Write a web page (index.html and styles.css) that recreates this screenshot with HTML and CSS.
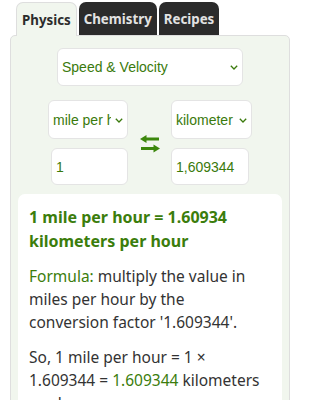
FILE: index.html
```html
<!DOCTYPE html>
<html>
<head>
<meta charset="utf-8">
<link rel="stylesheet" href="styles.css">
</head>
<body>
<div class="app">
  <div class="tabs">
    <div class="tab active">Physics</div>
    <div class="tab">Chemistry</div>
    <div class="tab">Recipes</div>
  </div>
  <div class="panel">
    <div class="sel-wrap category">
      <select class="sel"><option>Speed &amp; Velocity</option></select>
      <svg class="chev" viewBox="0 0 8 5" width="8" height="5"><path d="M0.8 0.8 L4 4 L7.2 0.8" fill="none" stroke="#3a7a0c" stroke-width="1.3"/></svg>
    </div>
    <div class="converter">
      <div class="col left">
        <div class="sel-wrap unit-l">
          <select class="sel"><option>mile per hour</option></select>
          <svg class="chev" viewBox="0 0 8 5" width="8" height="5"><path d="M0.8 0.8 L4 4 L7.2 0.8" fill="none" stroke="#3a7a0c" stroke-width="1.3"/></svg>
        </div>
        <input class="num num-l" type="text" value="1">
      </div>
      <div class="swap">
        <svg viewBox="0 0 20 18" width="20" height="18">
          <path d="M0 4 L6.5 0 V2.6 H19 V5.4 H6.5 V8 Z" fill="#3c870c"/>
          <path d="M20 13.5 L13.5 9.5 V12.1 H1 V14.9 H13.5 V17.5 Z" fill="#3c870c"/>
        </svg>
      </div>
      <div class="col right">
        <div class="sel-wrap unit-r">
          <select class="sel"><option>kilometer per hour</option></select>
          <svg class="chev" viewBox="0 0 8 5" width="8" height="5"><path d="M0.8 0.8 L4 4 L7.2 0.8" fill="none" stroke="#3a7a0c" stroke-width="1.3"/></svg>
        </div>
        <input class="num num-r" type="text" value="1,609344">
      </div>
    </div>
    <div class="card">
      <h2 class="result">1 mile per hour = 1.60934 kilometers per hour</h2>
      <p class="text"><span class="hl">Formula:</span> multiply the value in miles per hour by the conversion factor '1.609344'.</p>
      <p class="text">So, 1 mile per hour = 1 × 1.609344 = <span class="hl">1.609344</span> kilometers per hour.</p>
    </div>
  </div>
</div>
</body>
</html>
```
FILE: styles.css
```css
html, body {
  margin: 0;
  padding: 0;
  background: #ffffff;
}
body {
  font-family: "Noto Sans", "Open Sans", sans-serif;
  color: #333333;
  overflow: hidden;
  width: 300px;
  height: 400px;
}
.app {
  width: 280px;
  padding: 2px 10px 0 10px;
}
.tabs {
  display: flex;
  gap: 2px;
  padding-left: 6px;
  height: 33px;
  position: relative;
  z-index: 2;
}
.tab {
  box-sizing: border-box;
  height: 33px;
  padding: 0 5px;
  display: flex;
  align-items: center;
  font-weight: bold;
  font-size: 13.3px;
  color: #e2e2e2;
  background: #2b2b2b;
  border-radius: 7px 7px 0 0;
}
.tab.active {
  background: #f1f6ee;
  color: #2c2c2c;
  border: 1px solid #dedede;
  border-bottom: none;
  height: 34px;
  margin-bottom: -1px;
}
.panel {
  box-sizing: border-box;
  width: 280px;
  background: #f1f6ee;
  border: 1px solid #dedede;
  border-radius: 5px;
  padding: 12px 7px 0 7px;
  height: 400px;
}
.sel-wrap {
  position: relative;
  box-sizing: border-box;
}
.sel {
  appearance: none;
  -webkit-appearance: none;
  box-sizing: border-box;
  width: 100%;
  height: 100%;
  margin: 0;
  background: #ffffff;
  border: 1px solid #e4e4e4;
  border-radius: 6px;
  font-family: "Liberation Sans", Arial, sans-serif;
  font-size: 14px;
  color: #3a7a0c;
  padding: 0 16px 0 4px;
  outline: none;
}
.chev {
  position: absolute;
  right: 5px;
  top: 50%;
  margin-top: -2px;
  pointer-events: none;
}
.category {
  width: 186px;
  height: 38px;
  margin: 0 auto;
}
.converter {
  display: flex;
  justify-content: center;
  margin-top: 14px;
}
.col {
  display: flex;
  flex-direction: column;
  gap: 9px;
}
.col.left {
  align-items: flex-end;
}
.col.right {
  align-items: flex-start;
}
.unit-l {
  width: 80px;
  height: 39px;
}
.unit-r {
  width: 81px;
  height: 39px;
}
.swap {
  width: 43px;
  display: flex;
  align-items: center;
  justify-content: center;
  padding-top: 2px;
}
.num {
  box-sizing: border-box;
  height: 37px;
  margin: 0;
  background: #ffffff;
  border: 1px solid #e4e4e4;
  border-radius: 6px;
  font-family: "Liberation Sans", Arial, sans-serif;
  font-size: 14px;
  color: #3a7a0c;
  padding: 0 4px;
  outline: none;
}
.num-l {
  width: 77px;
}
.num-r {
  width: 78px;
}
.card {
  margin-top: 9px;
  background: #ffffff;
  border-radius: 7px;
  padding: 11px 17px 11px 11px;
}
.result {
  margin: 0 0 12px 0;
  font-size: 16px;
  line-height: 24px;
  font-weight: bold;
  color: #3b7d0c;
}
.text {
  margin: 0 0 12px 0;
  font-size: 15.5px;
  line-height: 23px;
  color: #333333;
}
.hl {
  color: #3b7d0c;
}
```
